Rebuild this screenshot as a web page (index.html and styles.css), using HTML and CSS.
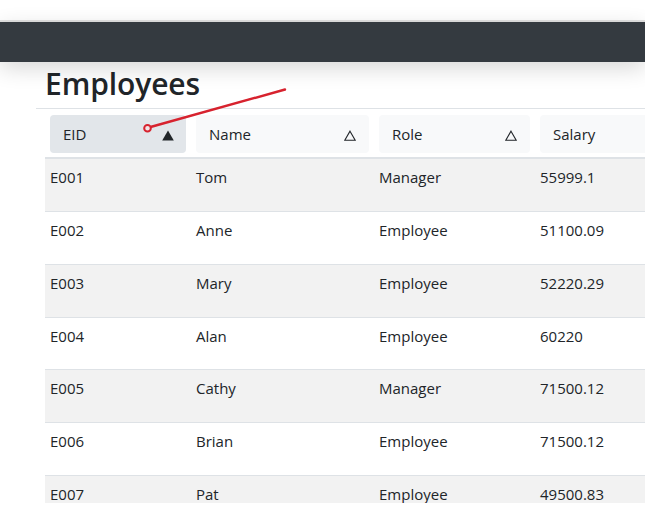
FILE: index.html
```html
<!DOCTYPE html>
<html lang="en">
<head>
<meta charset="utf-8">
<title>Employees</title>
<link rel="stylesheet" href="styles.css">
</head>
<body>
<div class="viewport">
  <div class="top-strip"></div>
  <div class="top-line"></div>
  <nav class="navbar"></nav>
  <main class="content">
    <h2 class="title">Employees</h2>
    <div class="table-wrap">
      <table class="grid">
        <colgroup>
          <col class="c1"><col class="c2"><col class="c3"><col class="c4">
        </colgroup>
        <thead>
          <tr>
            <th><div class="hcell active"><span>EID</span>
              <svg class="tri" width="12" height="11" viewBox="0 0 12 11"><path d="M6 0.5 L11.8 10.5 L0.2 10.5 Z" fill="#212529"/></svg></div></th>
            <th><div class="hcell"><span>Name</span>
              <svg class="tri" width="12" height="11" viewBox="0 0 12 11"><path d="M6 1.2 L11.2 10.2 L0.8 10.2 Z" fill="none" stroke="#212529" stroke-width="1.1"/></svg></div></th>
            <th><div class="hcell"><span>Role</span>
              <svg class="tri" width="12" height="11" viewBox="0 0 12 11"><path d="M6 1.2 L11.2 10.2 L0.8 10.2 Z" fill="none" stroke="#212529" stroke-width="1.1"/></svg></div></th>
            <th><div class="hcell"><span>Salary</span></div></th>
          </tr>
        </thead>
        <tbody>
          <tr><td>E001</td><td>Tom</td><td>Manager</td><td>55999.1</td></tr>
          <tr><td>E002</td><td>Anne</td><td>Employee</td><td>51100.09</td></tr>
          <tr><td>E003</td><td>Mary</td><td>Employee</td><td>52220.29</td></tr>
          <tr><td>E004</td><td>Alan</td><td>Employee</td><td>60220</td></tr>
          <tr><td>E005</td><td>Cathy</td><td>Manager</td><td>71500.12</td></tr>
          <tr><td>E006</td><td>Brian</td><td>Employee</td><td>71500.12</td></tr>
          <tr><td>E007</td><td>Pat</td><td>Employee</td><td>49500.83</td></tr>
        </tbody>
      </table>
    </div>
  </main>
  <svg class="annotation" width="645" height="514" viewBox="0 0 645 514">
    <line x1="150.5" y1="127" x2="285" y2="89.5" stroke="#d7222e" stroke-width="2.4" stroke-linecap="round"/>
    <circle cx="147.5" cy="128.3" r="3.3" fill="#f4e4e6" stroke="#d7222e" stroke-width="2"/>
  </svg>
</div>
</body>
</html>
```

FILE: styles.css
```css
html, body {
  margin: 0;
  padding: 0;
  background: #ffffff;
  overflow: hidden;
}

body {
  font-family: "Open Sans", "Noto Sans", sans-serif;
  color: #212529;
  width: 645px;
  height: 514px;
}

.viewport {
  position: relative;
  height: 503px;
  overflow: hidden;
}

.top-strip {
  height: 20px;
  background: #ffffff;
}

.top-line {
  height: 2px;
  background: #e2e2e2;
}

.navbar {
  position: relative;
  z-index: 1;
  height: 40px;
  background: #343a40;
  box-shadow: 0 6px 22px rgba(0, 0, 0, 0.16);
}

.content {
  padding-left: 36px;
}

.title {
  margin: 4px 0 6px 0;
  padding-left: 9px;
  font-size: 30px;
  line-height: 36px;
  font-weight: 600;
  color: #212529;
  letter-spacing: -0.1px;
}

.table-wrap {
  border-top: 1px solid #dee2e6;
  padding-left: 9px;
  width: 720px;
}

.grid {
  table-layout: fixed;
  border-collapse: separate;
  border-spacing: 0;
  width: 689px;
  font-size: 15px;
}

.c1 { width: 146px; }
.c2 { width: 183px; }
.c3 { width: 161px; }
.c4 { width: 199px; }

.grid th {
  padding: 6px 5px 4px 5px;
  border-bottom: 2px solid #dee2e6;
  text-align: left;
  font-weight: 400;
}

.hcell {
  display: flex;
  align-items: center;
  justify-content: space-between;
  height: 38px;
  padding: 0 13px 0 13px;
  background: #f8f9fa;
  border-radius: 4px;
  line-height: 24px;
}

.hcell.active {
  background: #e2e6ea;
  padding-right: 12px;
}

.tri {
  display: block;
  margin-top: 2px;
}

.grid td {
  box-sizing: border-box;
  height: 52.85px;
  padding: 6px 5px 0 5px;
  vertical-align: top;
  line-height: 24px;
  border-bottom: 1px solid #dee2e6;
}

.grid tbody tr:nth-child(odd) td {
  background: #f2f2f2;
}

.annotation {
  position: absolute;
  left: 0;
  top: 0;
  z-index: 2;
  pointer-events: none;
}
```
